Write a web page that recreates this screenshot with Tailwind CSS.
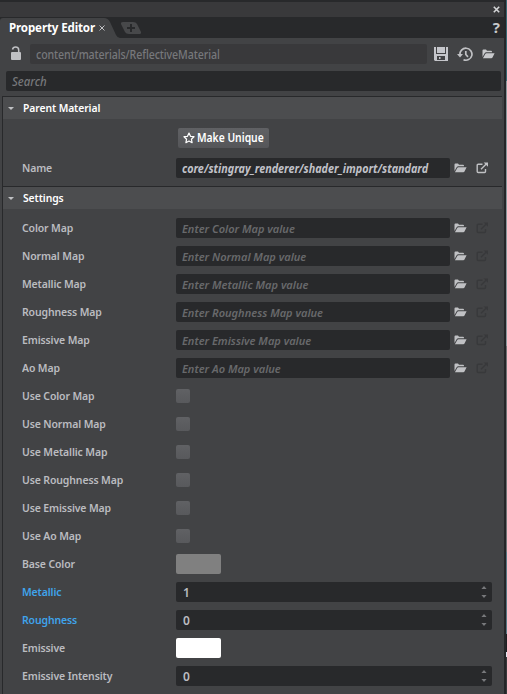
<!DOCTYPE html>
<html lang="en">
<head>
<meta charset="utf-8">
<title>Property Editor</title>
<script src="https://cdn.jsdelivr.net/npm/@tailwindcss/browser@4"></script>
</head>
<body class="w-[507px] h-[694px] overflow-hidden bg-[#28292b] font-['Noto_Sans',sans-serif] font-medium text-[11.5px] leading-[20px] text-[#bbbcc0] whitespace-nowrap">
<svg class="hidden">
  <symbol id="folder" viewBox="0 0 13 10"><path fill="currentColor" d="M.5 8V1.600Q.5.5 1.500.5H4l1 1.200h4q1 0 1 1v.5H4.300Q3.300 3.200 2.800 4ZM.9 9.200 3.400 4.800Q3.800 4.200 4.500 4.200H12.600L10.500 8.500Q10.100 9.200 9.300 9.200Z"/></symbol>
  <symbol id="link" viewBox="0 0 13 12"><path fill="none" stroke="currentColor" stroke-width="1.400" d="M6.500 2.200H2.200Q1.200 2.200 1.200 3.200V9.500q0 1 1 1H8.500q1 0 1-1V7M5 7.200 10.500 1.700"/><path fill="currentColor" d="M7.600.4H12V4.800Z"/></symbol>
  <symbol id="spin" viewBox="0 0 6 13"><path fill="#77787b" d="M3 0 5.600 3H.4ZM3 12 5.600 9H.4Z"/></symbol>
</svg>
<div class="flex h-full">
  <main class="w-[504px] h-full flex flex-col bg-[#424345]">
    <div class="h-[2px] bg-[#28292b]"></div>
    <div class="h-[15px] bg-[#39393b] flex justify-end items-center pr-[4px]">
      <svg class="w-[7px] h-[7px] mb-[1px]" viewBox="0 0 7 7"><path d="m.8.8 5.400 5.400m0-5.400L.8 6.200" stroke="#d4d5d7" stroke-width="1.600"/></svg>
    </div>
    <div class="h-[21px] bg-[#28292b] flex relative">
      <svg class="absolute left-0 top-0 w-[145px] h-[21px]" viewBox="0 0 145 21"><path fill="#424345" d="M0 21V4Q0 1 3 1H104Q108 1 110 5L116 18Q117.500 21 120 21Z"/><path fill="#47484a" d="M123 5H133Q136 5 137 7L141 15Q141.500 17 139 17H129Q126 17 125 15L121 7Q120.500 5 123 5Z"/><path stroke="#28292b" stroke-width="2" d="M131 7v8m-4-4h8"/></svg>
      <span class="relative w-[91px] pl-[9px] pt-[1px]"><span class="inline-block origin-left scale-x-[0.965] font-bold text-[12px] tracking-[-0.15px] text-white">Property Editor</span></span>
      <svg class="relative w-[6px] h-[6px] mt-[8px] ml-[8px]" viewBox="0 0 6 6"><path d="m.5.5 5 5m0-5-5 5" stroke="#c0c1c4"/></svg>
      <span class="relative ml-auto mr-[4px] text-[15px] font-bold text-[#c8c9cb]">?</span>
    </div>
    <div class="h-[33px] pt-[6px] flex">
      <svg class="w-[12px] h-[15px] ml-[10px] mt-[2px]" viewBox="0 0 12 15"><path fill="none" stroke="#c0c1c4" stroke-width="1.500" d="M2.500 3.500Q3 1 5.500 1 8.700 1 8.700 4V7"/><rect x="1" y="6" width="10" height="8" rx="1" fill="#c0c1c4"/></svg>
      <div class="ml-[8px] w-[397px] h-[20px] rounded-[2px] bg-[#39393b] pl-[6px] text-[#77787b] text-[12px] leading-[22px]"><span class="inline-block origin-left scale-x-[0.885] tracking-[-0.1px]">content/materials/ReflectiveMaterial</span></div>
      <svg class="w-[14px] h-[14px] ml-[7px] mt-[3px]" viewBox="0 0 14 14"><path fill="#c5c6cb" d="M0 0H2V7H12V0H14V14H1L0 13ZM3 0H11V6H3ZM3 9V13H11V9ZM5 10H6.500V12H5Z" fill-rule="evenodd"/></svg>
      <svg class="w-[16px] h-[15px] ml-[9px] mt-[3px]" viewBox="0 0 16 15"><path fill="none" stroke="#c0c1c4" stroke-width="1.700" d="M3 8A6 6 0 1 1 6.500 12.700M8.800 4V7.500L11 9.800"/><path fill="#c0c1c4" d="M0 7H6L3 10.500Z"/></svg>
      <svg class="w-[13px] h-[10px] ml-[9px] mt-[5px] text-[#c8c9cc]"><use href="#folder"/></svg>
    </div>
    <div class="ml-[6px] w-[495px] h-[20px] rounded-[2px] bg-[#28292b] pl-[6px] leading-[22px] italic text-[#77787b] text-[12px]"><span class="inline-block origin-left scale-x-[0.95]">Search</span></div>
    <div class="mt-[5px] ml-[2px] w-[500px] flex-1 border-l border-t border-[#28292b]" id="body"></div>
  </main>
  <div class="w-[2px] bg-[#252628]"></div>
  <div class="w-[1px] flex flex-col"><div class="h-[81px] bg-[#376873]"></div><div class="h-[265px] bg-[#8b979c]"></div><div class="h-[206px] bg-[#707375]"></div><div class="h-[82px] bg-[#577783]"></div><div class="h-[18px] bg-[#1f2023]"></div><div class="h-[5px] bg-[#dfe3f0]"></div><div class="flex-1 bg-[#38393b]"></div></div>
</div>
<script>
const head = t => `<div class="h-[22px] bg-[#4c4d4f] flex items-center text-white font-semibold"><svg class="w-[6px] h-[3px] ml-[5px] mr-[9px]" viewBox="0 0 6 3"><path fill="#c0c1c4" d="M0 0H6L3 3Z"/></svg><span class="inline-block origin-left scale-x-[0.9] tracking-[-0.1px]">${t}</span></div>`;
const row = (label, field, blue) => `<div class="h-[28px] flex items-center"><div class="w-[173px] pl-[19px] ${blue ? 'text-[#3fa4ec]' : ''}"><span class="inline-block origin-left scale-x-[0.91] font-semibold tracking-[-0.13px]">${label}</span></div>${field}</div>`;
const icons = c => `<svg class="w-[13px] h-[10px] ml-[4px] text-[#c0c1c4]"><use href="#folder"/></svg><svg class="w-[13px] h-[12px] ml-[9px] ${c}"><use href="#link"/></svg>`;
const map = n => row(n, `<div class="w-[274px] h-[20px] rounded-[2px] bg-[#28292b] pl-[6px] leading-[22px] italic text-[#68696c]"><span class="inline-block origin-left scale-x-[0.96] font-semibold">Enter ${n} value</span></div>` + icons('text-[#38393b]'));
const check = n => row(n, '<div class="w-[14px] h-[14px] rounded-[2px] bg-linear-to-b from-[#606164] to-[#58595c]"></div>');
const number = (n, v, blue) => row(n, `<div class="w-[316px] h-[20px] rounded-[2px] bg-[#28292b] pl-[7px] pr-[5px] leading-[22px] text-[12px] flex justify-between items-center"><span class="font-semibold pt-[1px]">${v}</span><svg class="w-[6px] h-[13px]"><use href="#spin"/></svg></div>`, blue);
document.getElementById('body').innerHTML =
  head('Parent Material') +
  `<div class="h-[67px] pt-[9px]">
    <div class="ml-[175px] w-[91px] h-[20px] rounded-[2px] bg-linear-to-b from-[#606164] to-[#555659] flex items-center pl-[5px] text-white font-semibold text-[12px]"><svg class="w-[12px] h-[12px] mr-[2px] shrink-0" viewBox="0 0 12 12"><path fill="none" stroke="#fff" stroke-width="1.200" stroke-linejoin="round" d="M6 1 7.500 4.300 11 4.700 8.400 7.200 9.100 10.700 6 9 2.900 10.700 3.600 7.200 1 4.700 4.500 4.300Z"/></svg><span class="inline-block origin-left scale-x-[0.86]">Make Unique</span></div>
    <div class="mt-[6px]">${row('Name', '<div class="w-[274px] h-[20px] rounded-[2px] bg-[#28292b] pl-[6px] leading-[22px] italic text-[#c0c1c8]"><span class="inline-block origin-left scale-x-[0.938] font-bold">core/stingray_renderer/shader_import/standard</span></div>' + icons('text-[#c0c1c4]'))}</div>
  </div><div class="h-[1px] bg-[#28292b]"></div>` +
  head('Settings') + '<div class="h-[5px]"></div>' +
  ['Color Map','Normal Map','Metallic Map','Roughness Map','Emissive Map','Ao Map'].map(map).join('') +
  ['Use Color Map','Use Normal Map','Use Metallic Map','Use Roughness Map','Use Emissive Map','Use Ao Map'].map(check).join('') +
  row('Base Color', '<div class="w-[45px] h-[20px] rounded-[2px] bg-[#808080]"></div>') +
  number('Metallic', 1, true) + number('Roughness', 0, true) +
  row('Emissive', '<div class="w-[45px] h-[20px] rounded-[2px] bg-white"></div>') +
  number('Emissive Intensity', 0);
</script>
</body>
</html>
